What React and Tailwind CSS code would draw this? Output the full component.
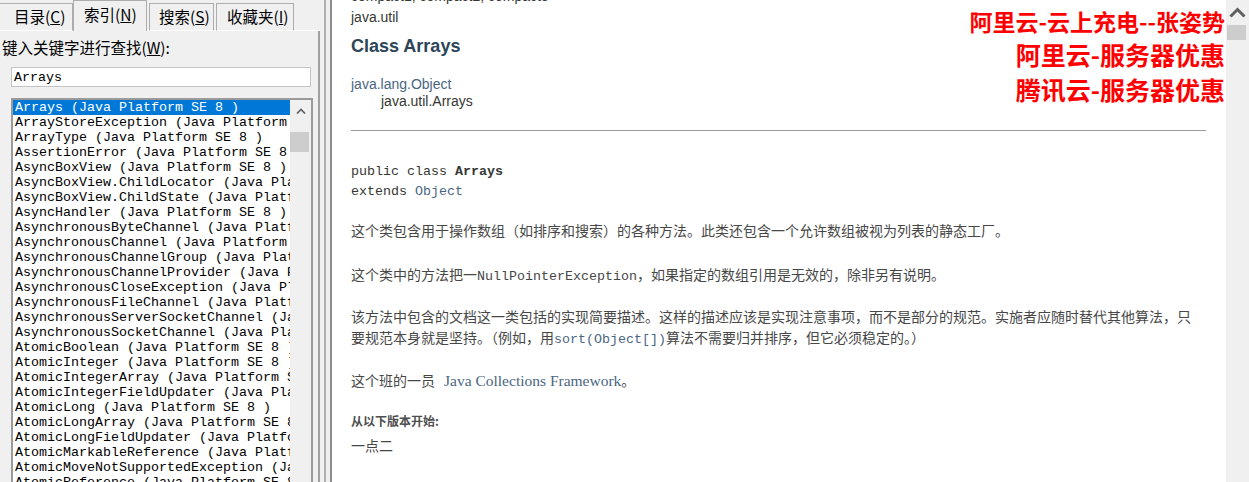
import React from 'react';

const rows = [
  'Arrays (Java Platform SE 8 )',
  'ArrayStoreException (Java Platform SE 8 )',
  'ArrayType (Java Platform SE 8 )',
  'AssertionError (Java Platform SE 8 )',
  'AsyncBoxView (Java Platform SE 8 )',
  'AsyncBoxView.ChildLocator (Java Platform SE 8 )',
  'AsyncBoxView.ChildState (Java Platform SE 8 )',
  'AsyncHandler (Java Platform SE 8 )',
  'AsynchronousByteChannel (Java Platform SE 8 )',
  'AsynchronousChannel (Java Platform SE 8 )',
  'AsynchronousChannelGroup (Java Platform SE 8 )',
  'AsynchronousChannelProvider (Java Platform SE 8 )',
  'AsynchronousCloseException (Java Platform SE 8 )',
  'AsynchronousFileChannel (Java Platform SE 8 )',
  'AsynchronousServerSocketChannel (Java Platform SE 8 )',
  'AsynchronousSocketChannel (Java Platform SE 8 )',
  'AtomicBoolean (Java Platform SE 8 )',
  'AtomicInteger (Java Platform SE 8 )',
  'AtomicIntegerArray (Java Platform SE 8 )',
  'AtomicIntegerFieldUpdater (Java Platform SE 8 )',
  'AtomicLong (Java Platform SE 8 )',
  'AtomicLongArray (Java Platform SE 8 )',
  'AtomicLongFieldUpdater (Java Platform SE 8 )',
  'AtomicMarkableReference (Java Platform SE 8 )',
  'AtomicMoveNotSupportedException (Java Platform SE 8 )',
  'AtomicReference (Java Platform SE 8 )',
];

const ui = "font-['Noto_Sans_CJK_SC',sans-serif]";
const mono = "font-['Liberation_Mono','Noto_Sans_CJK_SC',monospace]";
const cjk = "font-['Noto_Sans_CJK_SC','Liberation_Sans',sans-serif]";

const SmallUp = () => (
  <svg width="10" height="6" viewBox="0 0 10 6">
    <path d="M1 5.5L5 1.5L9 5.5" fill="none" stroke="#606060" strokeWidth="1.7" />
  </svg>
);

const BigUp = () => (
  <svg width="17" height="11" viewBox="0 0 17 11">
    <path d="M1.5 9.5L8.5 2.5L15.5 9.5" fill="none" stroke="#606060" strokeWidth="3" />
  </svg>
);

const App = () => {
  return (
    <div className="relative flex w-[1249px] h-[482px] overflow-hidden bg-[#f0f0f0] text-black">
      {/* left: help index pane */}
      <div className={`w-[320px] h-full flex flex-col ${ui}`}>
        <div className="h-[31px] flex items-end text-[15.5px] text-black">
          <div className="w-[73px] h-[28px] border-t border-r border-b border-[#adadad] border-b-white flex items-center pl-[14px]">
            目录(<u>C</u>)
          </div>
          <div className="w-[74px] h-[31px] border-t border-r border-l border-[#adadad] flex items-start pt-[2px] pl-[10px]">
            索引(<u>N</u>)
          </div>
          <div className="w-[2px] h-px bg-white" />
          <div className="w-[65px] h-[28px] border-t border-r border-l border-b border-[#adadad] border-b-white flex items-center pl-[9px]">
            搜索(<u>S</u>)
          </div>
          <div className="w-[2px] h-px bg-white" />
          <div className="w-[78px] h-[28px] border-t border-r border-l border-b border-[#adadad] border-b-white flex items-center pl-[10px]">
            收藏夹(<u>I</u>)
          </div>
          <div className="flex-1 h-px bg-white" />
        </div>

        <div className="flex-1 min-h-0 flex flex-col border-r-2 border-r-[#a0a0a0]">
          <div className="mt-[6px] h-[20px] leading-[20px] pl-[2px] text-[15.5px] whitespace-nowrap">
            键入关键字进行查找(<u>W</u>):
          </div>
          <div className={`mt-[10px] ml-[11px] w-[300px] h-[20px] bg-white border border-[#c4c4c4] pl-[2px] pt-px leading-[18px] text-[13.33px] ${mono}`}>
            Arrays
          </div>
          <div className="mt-[11px] ml-[11px] w-[302px] flex-1 min-h-0 flex border-t-2 border-l-2 border-r-2 border-[#9a9a9a]">
            <div className={`w-[277px] bg-white overflow-hidden text-[13.33px] leading-[15px] ${mono}`}>
              {rows.map((r, i) => (
                <div
                  key={r}
                  className={`h-[15px] pl-[2px] whitespace-pre ${i === 0 ? 'bg-[#0078d7] text-white' : 'text-black'}`}
                >
                  {r}
                </div>
              ))}
            </div>
            <div className="w-[21px] bg-[#f0f0f0] flex flex-col">
              <div className="h-[22px] flex items-center justify-center">
                <SmallUp />
              </div>
              <div className="mt-[10px] h-[20px] w-[19px] bg-[#cdcdcd]" />
            </div>
          </div>
        </div>
      </div>

      {/* splitter */}
      <div className="w-[10px] h-full flex">
        <div className="w-[4px]" />
        <div className="w-[2px] bg-[#b0b0b0]" />
      </div>

      {/* right: document pane */}
      <div className="flex-1 h-full flex border-l-2 border-l-[#8c8c8c]">
        <div className="flex-1 bg-white pl-[19px] pr-[20px] text-[#353833] font-['Liberation_Sans','Noto_Sans_CJK_SC',sans-serif]">
          <div className="-mt-[14px] h-[20px] leading-[20px] text-[14px]">compact1, compact2, compact3</div>
          <div className="mt-px h-[20px] leading-[20px] text-[14px]">java.util</div>
          <div className="mt-[7px] h-[24px] leading-[24px] text-[18px] font-bold text-[#2c4557]">Class Arrays</div>
          <div className="mt-[18px] h-[17px] leading-[17px] text-[14px] text-[#4a6782]">java.lang.Object</div>
          <div className="h-[17px] leading-[17px] text-[14px] pl-[30px]">java.util.Arrays</div>
          <div className="mt-[20px] h-px bg-[#9a9a9a]" />

          <div className={`mt-[31px] text-[13.33px] leading-[20px] text-[#353833] ${mono}`}>
            <div className="h-[20px]">public class <b>Arrays</b></div>
            <div className="h-[20px]">extends <span className="text-[#4a6782]">Object</span></div>
          </div>

          <div className={`text-[14px] leading-[21px] text-[#474747] ${cjk}`}>
            <p className="mt-[18px]">这个类包含用于操作数组（如排序和搜索）的各种方法。此类还包含一个允许数组被视为列表的静态工厂。</p>
            <p className="mt-[23px]">
              这个类中的方法把一<span className={`text-[13.33px] leading-none ${mono}`}>NullPointerException</span>，如果指定的数组引用是无效的，除非另有说明。
            </p>
            <p className="mt-[21px] w-[848px]">
              该方法中包含的文档这一类包括的实现简要描述。这样的描述应该是实现注意事项，而不是部分的规范。实施者应随时替代其他算法，只要规范本身就是坚持。（例如，用<span className={`text-[13.33px] leading-none text-[#4a6782] ${mono}`}>sort(Object[])</span>算法不需要归并排序，但它必须稳定的。）
            </p>
            <p className="mt-[22px]">
              这个班的一员
              <span className="ml-[9px] text-[15.5px] leading-none text-[#4a6782] font-['Liberation_Serif',serif]">Java Collections Framework</span>。
            </p>
            <div className="mt-[21px] text-[12px] leading-[18px] font-bold text-[#4e4e4e]">从以下版本开始:</div>
            <div className="mt-[5px]">一点二</div>
          </div>
        </div>

        <div className="w-[23px] bg-[#f0f0f0] flex flex-col">
          <div className="h-[24px] flex items-center justify-center">
            <BigUp />
          </div>
          <div className="mt-px ml-px w-[19px] h-[15px] bg-[#cdcdcd]" />
        </div>
      </div>

      {/* floating ad lines */}
      <div className={`absolute right-[24px] top-[4px] text-right font-bold text-[#ff0000] ${ui}`}>
        <div className="text-[23px] leading-[34px]">阿里云-云上充电--张姿势</div>
        <div className="text-[25px] leading-[33px]">阿里云-服务器优惠</div>
        <div className="text-[25px] leading-[37px]">腾讯云-服务器优惠</div>
      </div>
    </div>
  );
};

export default App;
